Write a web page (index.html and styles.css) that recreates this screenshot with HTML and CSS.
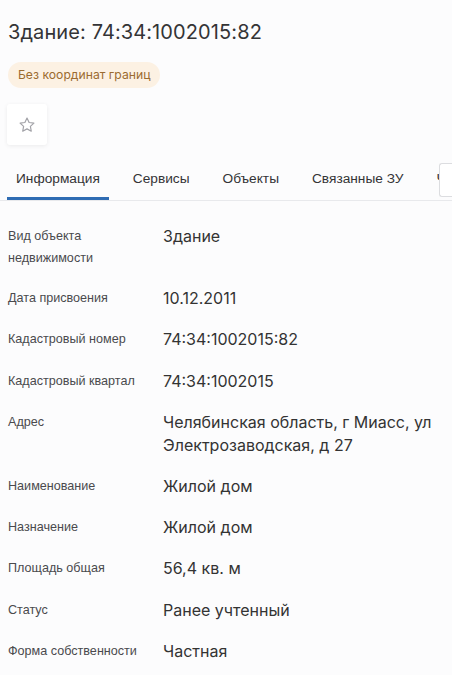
FILE: index.html
```html
<!DOCTYPE html>
<html lang="ru">
<head>
    <meta charset="UTF-8">
    <meta name="viewport" content="width=device-width, initial-scale=1.0">
    <title>Здание: 74:34:1002015:82</title>
    <link rel="stylesheet" href="styles.css">
</head>
<body>
    <div class="page">
        <h1 class="title">Здание: 74:34:1002015:82</h1>
        <div class="badge">Без координат границ</div>

        <button class="fav" type="button" aria-label="В избранное">
            <svg width="18" height="18" viewBox="0 0 24 24" fill="none" stroke="#a3a3a8" stroke-width="1.6" stroke-linejoin="round">
                <path d="M12 2.8l2.8 5.9 6.4.8-4.7 4.4 1.2 6.4L12 17.2l-5.7 3.1 1.2-6.4-4.7-4.4 6.4-.8z"/>
            </svg>
        </button>

        <div class="tabs-wrap">
            <nav class="tabs">
                <div class="tab active">Информация</div>
                <div class="tab">Сервисы</div>
                <div class="tab">Объекты</div>
                <div class="tab">Связанные ЗУ</div>
                <div class="tab">Чертежи</div>
            </nav>
            <div class="tabs-more"></div>
        </div>

        <dl class="info">
            <dt>Вид объекта<br>недвижимости</dt>
            <dd>Здание</dd>

            <dt>Дата присвоения</dt>
            <dd>10.12.2011</dd>

            <dt>Кадастровый номер</dt>
            <dd>74:34:1002015:82</dd>

            <dt>Кадастровый квартал</dt>
            <dd>74:34:1002015</dd>

            <dt>Адрес</dt>
            <dd>Челябинская область, г Миасс, ул Электрозаводская, д 27</dd>

            <dt>Наименование</dt>
            <dd>Жилой дом</dd>

            <dt>Назначение</dt>
            <dd>Жилой дом</dd>

            <dt>Площадь общая</dt>
            <dd>56,4 кв. м</dd>

            <dt>Статус</dt>
            <dd>Ранее учтенный</dd>

            <dt>Форма собственности</dt>
            <dd>Частная</dd>
        </dl>
    </div>
</body>
</html>
```

FILE: styles.css
```css
body {
    margin: 0;
    padding: 0;
    background: #fcfcfd;
    color: #333;
    font-family: Inter, 'Noto Sans', sans-serif;
    overflow: hidden;
}

.page {
    padding: 20px 0 0 0;
}

.title {
    margin: 0 0 0 8px;
    font-size: 20px;
    line-height: 24px;
    font-weight: 400;
    letter-spacing: 0.1px;
    color: #343436;
}

.badge {
    display: inline-block;
    margin: 18px 0 0 8px;
    padding: 0 10px;
    height: 26px;
    line-height: 26px;
    border-radius: 13px;
    background: #fcf1e3;
    color: #9b6b30;
    font-size: 12.2px;
}

.fav {
    display: flex;
    align-items: center;
    justify-content: center;
    width: 40px;
    height: 41px;
    margin: 16px 0 0 7px;
    padding: 0;
    border: none;
    border-radius: 3px;
    background: #fff;
    box-shadow: 0 1px 4px rgba(0, 0, 0, 0.07);
}

.tabs-wrap {
    position: relative;
    margin-top: 15px;
}

.tabs {
    display: flex;
    gap: 15px;
    padding-left: 7px;
    border-bottom: 1px solid #e8e9ec;
    overflow: hidden;
    white-space: nowrap;
}

.tab {
    padding: 9px 9px 8px;
    font-family: 'Liberation Sans', Arial, sans-serif;
    font-size: 13.7px;
    line-height: 20px;
    color: #343436;
    border-bottom: 3px solid transparent;
}

.tab.active {
    border-bottom-color: #2f6cb3;
}

/* scroll button that covers the last tab */
.tabs-more {
    position: absolute;
    top: 3px;
    right: 0;
    width: 12px;
    height: 32px;
    background: #fff;
    border: 1px solid #dcdde0;
    border-right: none;
    border-radius: 3px 0 0 3px;
}

.info {
    display: grid;
    grid-template-columns: 155px 1fr;
    row-gap: 18.2px;
    margin: 24px 0 0 0;
    padding: 0 8px;
}

.info dt {
    font-family: 'Liberation Sans', Arial, sans-serif;
    font-size: 12.6px;
    line-height: 22px;
    color: #4a4a4d;
}

.info dd {
    margin: 0;
    font-size: 16px;
    line-height: 23px;
    color: #333;
}
```
